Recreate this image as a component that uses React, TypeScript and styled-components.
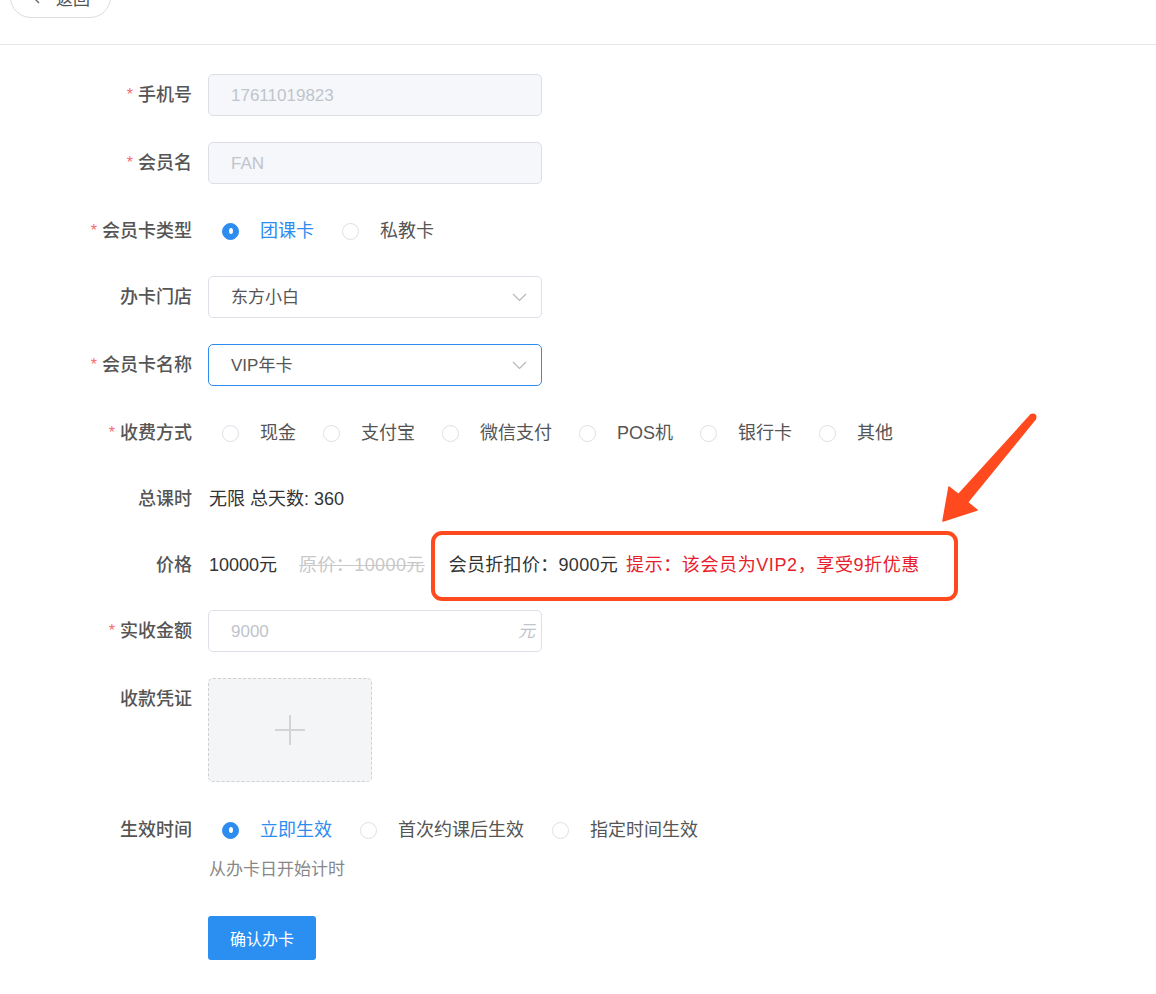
import React from "react";
import styled, { createGlobalStyle } from "styled-components";

const GlobalStyle = createGlobalStyle`
  html, body { margin: 0; padding: 0; background: #fff; }
  body {
    font-family: "Liberation Sans", "Noto Sans CJK SC", sans-serif;
    color: #333;
    -webkit-font-smoothing: antialiased;
  }
  * { box-sizing: border-box; }
`;

const Page = styled.div`
  position: relative;
  width: 1156px;
  min-height: 994px;
  overflow: hidden;
`;

const Header = styled.div`
  height: 45px;
  padding-left: 10px;
  border-bottom: 1px solid #e6e6e6;
  display: flex;
  align-items: flex-start;
`;

const BackButton = styled.button`
  margin-top: -24px;
  width: 101px;
  height: 42px;
  border: 1px solid #dcdcdc;
  border-radius: 21px;
  background: #fff;
  display: flex;
  align-items: center;
  justify-content: center;
  gap: 16px;
  font-family: inherit;
  font-size: 17px;
  color: #555;
  padding: 0;
`;

const Form = styled.div`
  padding-top: 29px;
  display: flex;
  flex-direction: column;
`;

const Row = styled.div<{ $top?: boolean; $mb?: number }>`
  display: flex;
  align-items: ${(p) => (p.$top ? "flex-start" : "center")};
  height: ${(p) => (p.$top ? "auto" : "42px")};
  margin-bottom: ${(p) => (p.$mb ?? 26)}px;
`;

const Label = styled.div`
  width: 208px;
  height: 42px;
  padding-right: 16px;
  display: flex;
  align-items: center;
  justify-content: flex-end;
  font-size: 18px;
  font-weight: 500;
  line-height: 1;
  color: #555;
  flex-shrink: 0;
`;

const Star = styled.span`
  color: #f56c6c;
  margin-right: 5px;
  font-size: 16px;
  font-weight: 400;
  line-height: 1;
`;

const Content = styled.div`
  display: flex;
  flex-direction: column;
`;

const InputBox = styled.div<{ $disabled?: boolean; $focus?: boolean }>`
  position: relative;
  width: 334px;
  height: 42px;
  border-radius: 5px;
  border: ${(p) => (p.$focus ? "1.5px solid #2d8cf0" : "1px solid #dcdfe6")};
  background: ${(p) => (p.$disabled ? "#f5f7fa" : "#fff")};
  display: flex;
  align-items: center;
  padding: 0 14px 0 22px;
  font-size: 17px;
  line-height: 1;
  color: ${(p) => (p.$disabled ? "#c0c4cc" : "#555")};
`;

const InputText = styled.span<{ $muted?: boolean }>`
  flex: 1;
  color: ${(p) => (p.$muted ? "#c0c4cc" : "inherit")};
`;

const Suffix = styled.span`
  color: #c0c4cc;
  font-style: italic;
  font-size: 17px;
  margin-right: -8px;
`;

const RadioGroup = styled.div<{ $gap: number }>`
  display: flex;
  align-items: center;
  padding-left: 14px;
  gap: ${(p) => p.$gap}px;
`;

const RadioItem = styled.label<{ $checked?: boolean }>`
  display: flex;
  align-items: center;
  gap: 21px;
  font-size: 18px;
  line-height: 1;
  color: ${(p) => (p.$checked ? "#2d8cf0" : "#555")};
`;

const RadioCircle = styled.span<{ $checked?: boolean }>`
  width: 17px;
  height: 17px;
  border-radius: 50%;
  border: 1px solid ${(p) => (p.$checked ? "#2d8cf0" : "#dcdfe6")};
  background: ${(p) => (p.$checked ? "#2d8cf0" : "#fff")};
  display: flex;
  align-items: center;
  justify-content: center;
  &::after {
    content: "";
    width: 4px;
    height: 6px;
    border-radius: 50%;
    background: #fff;
    display: ${(p) => (p.$checked ? "block" : "none")};
  }
`;

const Value = styled.span`
  font-size: 18px;
  line-height: 1;
  color: #333;
  padding-left: 1px;
`;

const PriceLine = styled.div`
  display: flex;
  align-items: center;
  font-size: 18px;
  line-height: 1;
  padding-left: 1px;
`;

const OldPrice = styled.span`
  color: #c8c8c8;
  text-decoration: line-through;
  margin-left: 22px;
  letter-spacing: 0.4px;
`;

const MemberPrice = styled.span`
  color: #333;
  margin-left: 24px;
  letter-spacing: 0.3px;
`;

const Tip = styled.span`
  color: #e8202d;
  margin-left: 8px;
  letter-spacing: 0.6px;
`;

const Upload = styled.div`
  width: 164px;
  height: 104px;
  border: 1.5px dashed #d0d0d0;
  border-radius: 5px;
  background: #f4f5f7;
  display: flex;
  align-items: center;
  justify-content: center;
`;

const Hint = styled.div`
  margin-left: 208px;
  padding-left: 1px;
  font-size: 17px;
  line-height: 22px;
  color: #888;
  margin-top: -18px;
`;

const SubmitButton = styled.button`
  margin: 35px 0 0 208px;
  width: 108px;
  height: 44px;
  border: none;
  border-radius: 3px;
  background: #2b8ff2;
  color: #fff;
  font-family: inherit;
  font-size: 16px;
`;

const Annotation = styled.div`
  position: absolute;
  left: 431px;
  top: 531px;
  width: 527px;
  height: 70px;
  border: 4px solid #ff4a1f;
  border-radius: 11px;
  pointer-events: none;
`;

const ArrowSvg = styled.svg`
  position: absolute;
  left: 0;
  top: 0;
  pointer-events: none;
`;

const Chevron = () => (
  <svg width="15" height="9" viewBox="0 0 15 9">
    <polyline points="1,1 7.5,7.5 14,1" fill="none" stroke="#b8b8b8" strokeWidth="1.2" />
  </svg>
);

const Radio = ({ label, checked }: { label: string; checked?: boolean }) => (
  <RadioItem $checked={checked}>
    <RadioCircle $checked={checked} />
    {label}
  </RadioItem>
);

const Req = () => <Star>*</Star>;

export default function App() {
  return (
    <Page>
      <GlobalStyle />
      <Header>
        <BackButton>
          <svg width="9" height="14" viewBox="0 0 9 14">
            <polyline points="8,1 2,7 8,13" fill="none" stroke="#666" strokeWidth="1.4" />
          </svg>
          返回
        </BackButton>
      </Header>
      <Form>
        <Row>
          <Label><Req />手机号</Label>
          <InputBox $disabled>
            <InputText>17611019823</InputText>
          </InputBox>
        </Row>
        <Row>
          <Label><Req />会员名</Label>
          <InputBox $disabled>
            <InputText>FAN</InputText>
          </InputBox>
        </Row>
        <Row $mb={24}>
          <Label><Req />会员卡类型</Label>
          <RadioGroup $gap={28}>
            <Radio label="团课卡" checked />
            <Radio label="私教卡" />
          </RadioGroup>
        </Row>
        <Row>
          <Label>办卡门店</Label>
          <InputBox>
            <InputText>东方小白</InputText>
            <Chevron />
          </InputBox>
        </Row>
        <Row>
          <Label><Req />会员卡名称</Label>
          <InputBox $focus>
            <InputText>VIP年卡</InputText>
            <Chevron />
          </InputBox>
        </Row>
        <Row $mb={24}>
          <Label><Req />收费方式</Label>
          <RadioGroup $gap={27}>
            <Radio label="现金" />
            <Radio label="支付宝" />
            <Radio label="微信支付" />
            <Radio label="POS机" />
            <Radio label="银行卡" />
            <Radio label="其他" />
          </RadioGroup>
        </Row>
        <Row $mb={24}>
          <Label>总课时</Label>
          <Value>无限 总天数: 360</Value>
        </Row>
        <Row $mb={24}>
          <Label>价格</Label>
          <PriceLine>
            <span>10000元</span>
            <OldPrice>原价：10000元</OldPrice>
            <MemberPrice>会员折扣价：9000元</MemberPrice>
            <Tip>提示：该会员为VIP2，享受9折优惠</Tip>
          </PriceLine>
        </Row>
        <Row>
          <Label><Req />实收金额</Label>
          <InputBox>
            <InputText $muted>9000</InputText>
            <Suffix>元</Suffix>
          </InputBox>
        </Row>
        <Row $top $mb={27}>
          <Label>收款凭证</Label>
          <Upload>
            <svg width="32" height="32" viewBox="0 0 32 32">
              <line x1="16" y1="1" x2="16" y2="31" stroke="#d4d4d4" strokeWidth="2" />
              <line x1="1" y1="16" x2="31" y2="16" stroke="#d4d4d4" strokeWidth="2" />
            </svg>
          </Upload>
        </Row>
        <Row>
          <Label>生效时间</Label>
          <Content>
            <RadioGroup $gap={28}>
              <Radio label="立即生效" checked />
              <Radio label="首次约课后生效" />
              <Radio label="指定时间生效" />
            </RadioGroup>
          </Content>
        </Row>
        <Hint>从办卡日开始计时</Hint>
        <SubmitButton>确认办卡</SubmitButton>
      </Form>
      <Annotation />
      <ArrowSvg width="1156" height="994" viewBox="0 0 1156 994">
        <polygon
          points="1030.7,415 1035.3,419 967.5,502.4 977,510 943,521 949,487 958.5,494.6"
          fill="#ff4a1f"
          stroke="#ff4a1f"
          strokeLinejoin="round"
          strokeWidth="1.5"
        />
        <circle cx="1033" cy="417" r="3.5" fill="#ff4a1f" />
      </ArrowSvg>
    </Page>
  );
}
